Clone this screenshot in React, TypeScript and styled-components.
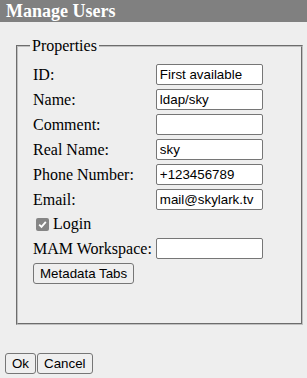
import styled, { createGlobalStyle } from "styled-components";

const GlobalStyle = createGlobalStyle`
  body {
    margin: 0;
    background: #eeeeee;
    font-family: "Liberation Serif", "Times New Roman", serif;
    font-size: 16px;
    color: #000;
  }
`;

const Header = styled.div`
  height: 22px;
  line-height: 22px;
  padding-left: 6px;
  background: #808080;
  color: #fff;
  font-weight: bold;
  font-size: 18px;
`;

const Fieldset = styled.fieldset`
  margin: 15px 4px 0 16px;
  padding: 0 12px 36px 12px;
  border: 2px groove #c0c0c0;
`;

const Legend = styled.legend`
  padding: 0 2px;
`;

const Table = styled.table`
  border-spacing: 2px;
  margin-top: 6px;
  td {
    padding: 1px;
    white-space: nowrap;
  }
`;

const TextInput = styled.input`
  box-sizing: border-box;
  display: block;
  width: 107px;
  height: 21px;
  padding: 1px 3px;
  border: 1px solid #767676;
  border-radius: 2px;
  background: #fff;
  font-family: "Liberation Sans", Arial, sans-serif;
  font-size: 13.33px;
  color: #000;
  margin: 0;
`;

const Button = styled.button`
  box-sizing: border-box;
  font-family: "Liberation Sans", Arial, sans-serif;
  font-size: 13.33px;
  padding: 1px 6px;
  height: 21px;
  border: 1px solid #767676;
  border-radius: 3px;
  background: #efefef;
  color: #000;
  margin: 0;
`;

const CheckLabel = styled.label`
  display: flex;
  align-items: center;
  gap: 4px;
  height: 20px;
`;

const CheckBox = styled.span`
  display: inline-flex;
  align-items: center;
  justify-content: center;
  width: 13px;
  height: 13px;
  margin: 0 0 0 3px;
  border-radius: 2px;
  background: #858585;
`;

const Footer = styled.div`
  display: flex;
  gap: 1px;
  margin: 28px 0 0 5px;
`;

const fields: [string, string][] = [
  ["ID:", "First available"],
  ["Name:", "ldap/sky"],
  ["Comment:", ""],
  ["Real Name:", "sky"],
  ["Phone Number:", "+123456789"],
  ["Email:", "mail@skylark.tv"],
];

export default function App() {
  return (
    <>
      <GlobalStyle />
      <Header>Manage Users</Header>
      <Fieldset>
        <Legend>Properties</Legend>
        <Table>
          <tbody>
            {fields.map(([label, value]) => (
              <tr key={label}>
                <td>{label}</td>
                <td>
                  <TextInput defaultValue={value} />
                </td>
              </tr>
            ))}
            <tr>
              <td colSpan={2}>
                <CheckLabel>
                  <CheckBox>
                    <svg width="9" height="9" viewBox="0 0 9 9">
                      <path
                        d="M1.2 4.6 L3.5 6.9 L7.8 1.8"
                        fill="none"
                        stroke="#fff"
                        strokeWidth="1.8"
                      />
                    </svg>
                  </CheckBox>
                  Login
                </CheckLabel>
              </td>
            </tr>
            <tr>
              <td>MAM Workspace:</td>
              <td>
                <TextInput defaultValue="" />
              </td>
            </tr>
            <tr>
              <td colSpan={2}>
                <Button>Metadata Tabs</Button>
              </td>
            </tr>
          </tbody>
        </Table>
      </Fieldset>
      <Footer>
        <Button>Ok</Button>
        <Button>Cancel</Button>
      </Footer>
    </>
  );
}
